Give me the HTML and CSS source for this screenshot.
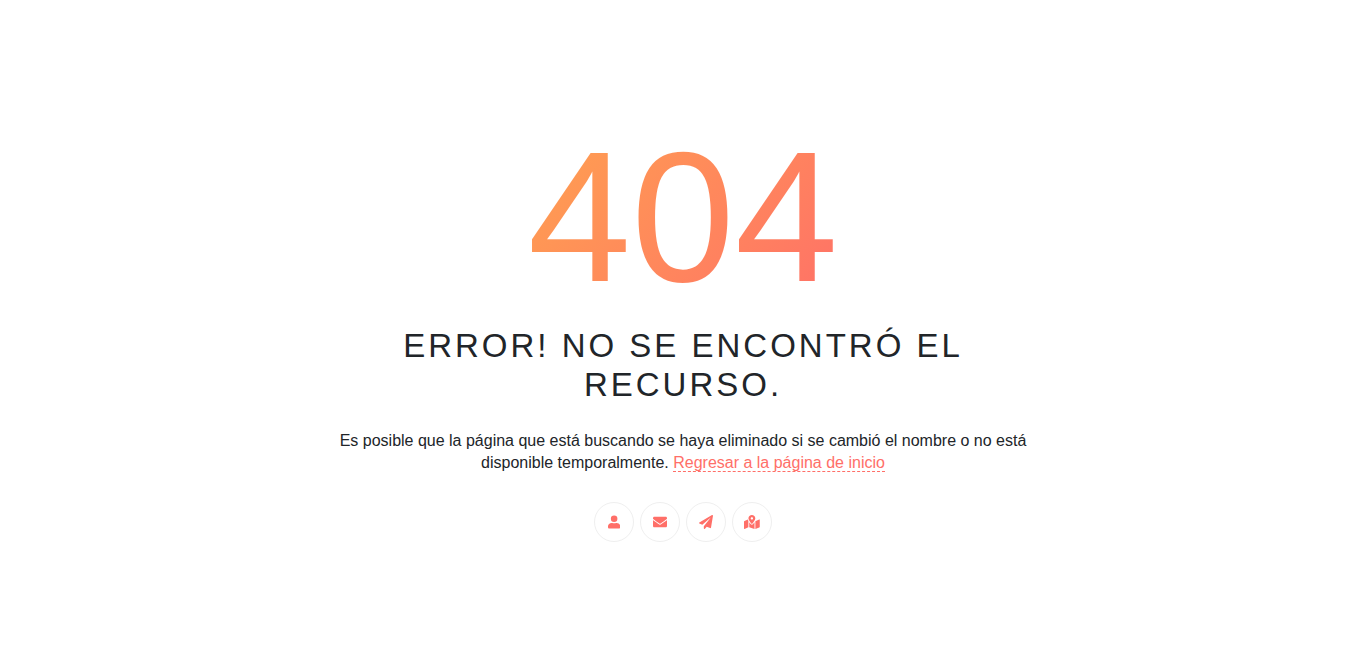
FILE: index.html
```html
<!DOCTYPE html>
<html lang="es">
<head>
<meta charset="utf-8">
<meta name="viewport" content="width=device-width, initial-scale=1">
<title>404</title>
<link rel="stylesheet" href="styles.css">
</head>
<body>
<main class="notfound">
  <h1 class="notfound-code">404</h1>
  <h2 class="notfound-title">Error! No se encontró el recurso.</h2>
  <p class="notfound-text">Es posible que la página que está buscando se haya eliminado si se cambió el nombre o no está disponible temporalmente. <a class="home-link" href="#">Regresar a la página de inicio</a></p>
  <nav class="social" aria-label="Contacto">
    <a class="social-link" href="#" aria-label="Perfil"><svg class="icon" viewBox="0 0 448 512" aria-hidden="true"><path d="M224 256a120 120 0 1 0 0-240 120 120 0 0 0 0 240zm90 32h-20c-43 20-97 20-140 0h-20C60 288 0 340 0 414v34c0 27 21 48 48 48h352c27 0 48-21 48-48v-34c0-74-60-126-134-126z"/></svg></a>
    <a class="social-link" href="#" aria-label="Correo"><svg class="icon" viewBox="0 0 512 512" aria-hidden="true"><path d="M502.300 190.800c3.900-3.100 9.700-.2 9.700 4.700V400c0 26.500-21.500 48-48 48H48c-26.500 0-48-21.500-48-48V195.600c0-5 5.700-7.800 9.700-4.700 22.400 17.400 52.100 39.500 154.100 113.600 21.100 15.400 56.700 47.800 92.200 47.600 35.700.3 72-32.800 92.300-47.600 102-74.100 131.600-96.300 154-113.700zM256 320c23.200.4 56.600-29.200 73.400-41.400 132.700-96.300 142.800-104.700 173.400-128.700 5.800-4.500 9.200-11.500 9.200-18.900v-19c0-26.500-21.500-48-48-48H48c-26.500 0-48 21.500-48 48v19c0 7.400 3.400 14.300 9.200 18.900 30.600 23.900 40.700 32.400 173.400 128.700 16.800 12.200 50.200 41.800 73.400 41.400z"/></svg></a>
    <a class="social-link" href="#" aria-label="Enviar"><svg class="icon" viewBox="0 0 512 512" aria-hidden="true"><path d="M476 3.200L12.500 270.600c-18.100 10.400-15.800 35.600 2.200 43.200L121 358.400l287.300-253.200c5.500-4.900 13.300 2.600 8.600 8.300L176 407v80.500c0 23.600 28.500 32.900 42.500 15.800L282 426l124.600 52.200c14.200 6 30.400-2.900 33-18.200l72-432C515 7.800 493.300-6.800 476 3.200z"/></svg></a>
    <a class="social-link" href="#" aria-label="Ubicación"><svg class="icon" viewBox="0 0 576 512" aria-hidden="true"><path d="M288 0c-69.600 0-126 56.400-126 126 0 56.300 82.400 158.800 113.900 196.000 6.400 7.500 17.800 7.500 24.200 0C331.700 284.800 414 182.300 414 126 414 56.400 357.600 0 288 0zm0 168c-23.200 0-42-18.800-42-42s18.800-42 42-42 42 18.800 42 42-18.800 42-42 42zM20.100 215.900A32 32 0 0 0 0 245.700v250.300c0 11.300 11.400 19.100 21.900 14.900L160 448V214.900c-8.800-16-16.100-31.500-21.300-46.400zM288 359.700c-14.100 0-27.400-6.200-36.500-17-19.700-23.200-40.600-49.600-59.500-76.700V448l192 64V266c-18.900 27.100-39.800 53.500-59.500 76.700-9.100 10.800-22.400 17-36.500 17zM554.100 161.200L416 224v288l139.900-56A32 32 0 0 0 576 426.200V176c0-11.300-11.400-19.100-21.900-14.800z"/></svg></a>
  </nav>
</main>
</body>
</html>
```
FILE: styles.css
```css
* {
  box-sizing: border-box;
}

body {
  margin: 0;
  min-height: 100vh;
  display: grid;
  place-items: center;
  background: #fff;
  color: #212529;
  font-family: Arial, "Liberation Sans", sans-serif;
}

.notfound {
  width: 100%;
  max-width: 710px;
  display: flex;
  flex-direction: column;
  align-items: center;
  text-align: center;
}

.notfound-code {
  margin: 0 0 2px;
  font-size: 186px;
  font-weight: 400;
  line-height: 214px;
  color: transparent;
  background: linear-gradient(130deg, #ffa34f, #ff6f68);
  -webkit-background-clip: text;
  background-clip: text;
}

.notfound-title {
  margin: 0 0 26px;
  font-size: 33px;
  font-weight: 400;
  line-height: 39px;
  letter-spacing: 3px;
  text-transform: uppercase;
}

.notfound-text {
  margin: 0 0 28px;
  font-size: 16px;
  line-height: 22px;
}

.home-link {
  color: #ff6f68;
  text-decoration: none;
  border-bottom: 1px dashed #ff6f68;
}

.social {
  display: flex;
  gap: 6px;
}

.social-link {
  width: 40px;
  height: 40px;
  display: flex;
  align-items: center;
  justify-content: center;
  border: 1px solid #efefef;
  border-radius: 50%;
  color: #ff6f68;
}

.icon {
  height: 14px;
  fill: currentColor;
}
```
